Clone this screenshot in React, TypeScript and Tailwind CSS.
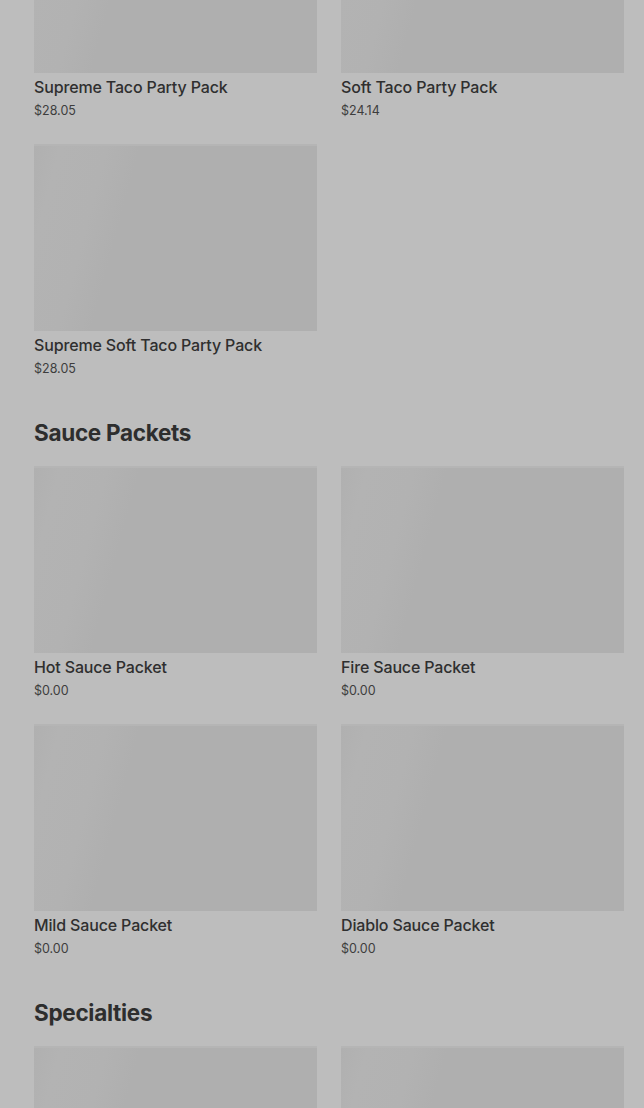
import React from 'react';

interface Item {
  name?: string;
  price?: string;
}

const sections: { title?: string; items: Item[] }[] = [
  {
    items: [
      { name: 'Supreme Taco Party Pack', price: '$28.05' },
      { name: 'Soft Taco Party Pack', price: '$24.14' },
      { name: 'Supreme Soft Taco Party Pack', price: '$28.05' }
    ]
  },
  {
    title: 'Sauce Packets',
    items: [
      { name: 'Hot Sauce Packet', price: '$0.00' },
      { name: 'Fire Sauce Packet', price: '$0.00' },
      { name: 'Mild Sauce Packet', price: '$0.00' },
      { name: 'Diablo Sauce Packet', price: '$0.00' }
    ]
  },
  {
    title: 'Specialties',
    // still loading, only the placeholders are on screen
    items: [{}, {}]
  }
];

const ItemCard: React.FC<{ item: Item }> = ({ item }) => (
  <div className="flex flex-col">
    <div className="h-[187px] w-full bg-[linear-gradient(105deg,#b0b0b0_0%,#b3b3b3_8%,#b2b2b2_22%,#afafaf_32%,#afafaf_100%)] border-t-2 border-[#b5b5b5]" />
    {item.name && (
      <>
        <div className="mt-[4px] text-[16px] leading-[20px] font-medium text-[#2f2f2f] tracking-[-0.15px]">
          {item.name}
        </div>
        <div className="mt-[4px] text-[12.5px] leading-[20px] text-[#3d3d3d]">{item.price}</div>
      </>
    )}
  </div>
);

export default function App() {
  return (
    <div
      className="h-[1108px] w-[644px] overflow-hidden bg-[#bdbdbd]"
      style={{ fontFamily: 'Inter, "Liberation Sans", sans-serif' }}
    >
      <div className="-mt-[114px] pl-[34px] pr-[20px]">
        {sections.map((section, i) => (
          <section key={i} className={i > 0 ? 'mt-[40px]' : ''}>
            {section.title && (
              <h2 className="mb-[19px] text-[22.5px] leading-[28px] font-bold text-[#2e2e2e] tracking-[-0.3px]">
                {section.title}
              </h2>
            )}
            <div className="grid grid-cols-2 gap-x-[24px] gap-y-[23px]">
              {section.items.map((item, j) => (
                <ItemCard key={j} item={item} />
              ))}
            </div>
          </section>
        ))}
      </div>
    </div>
  );
}
